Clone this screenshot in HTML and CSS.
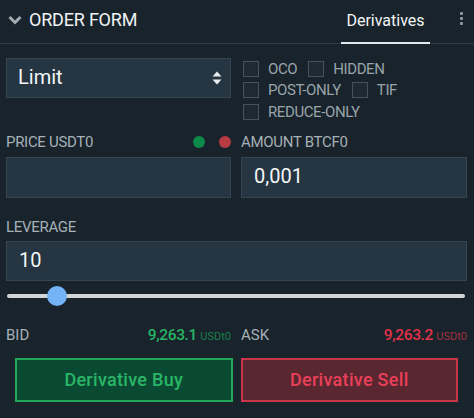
FILE: index.html
```html
<!DOCTYPE html>
<html>
<head>
<meta charset="utf-8">
<link rel="stylesheet" href="styles.css">
</head>
<body>
<div class="panel">
  <header class="header">
    <div class="title">
      <svg class="chev" width="14" height="10" viewBox="0 0 14 10"><path d="M1.5 2 L7 7.5 L12.5 2" fill="none" stroke="#a3abb2" stroke-width="3"/></svg>
      <span>ORDER FORM</span>
    </div>
    <div class="tabs">
      <div class="tab">Derivatives</div>
      <div class="kebab"><i></i><i></i><i></i></div>
    </div>
  </header>

  <div class="form">
    <div class="select">
      <span>Limit</span>
      <svg width="10" height="14" viewBox="0 0 10 14"><path d="M5 0.5 L9.5 5.5 H0.5 Z" fill="#e8ecef"/><path d="M5 13.5 L9.5 8.5 H0.5 Z" fill="#e8ecef"/></svg>
    </div>
    <div class="checks">
      <div class="crow"><label class="chk"><i class="box"></i>OCO</label><label class="chk"><i class="box"></i>HIDDEN</label></div>
      <div class="crow"><label class="chk"><i class="box"></i>POST-ONLY</label><label class="chk"><i class="box"></i>TIF</label></div>
      <div class="crow"><label class="chk"><i class="box"></i>REDUCE-ONLY</label></div>
    </div>

    <div class="field">
      <div class="label-row"><span class="label">PRICE USDT0</span><span class="dots"><i class="dot green"></i><i class="dot red"></i></span></div>
      <div class="input"></div>
    </div>
    <div class="field">
      <div class="label-row"><span class="label">AMOUNT BTCF0</span></div>
      <div class="input">0,001</div>
    </div>

    <div class="field wide">
      <div class="label-row"><span class="label">LEVERAGE</span></div>
      <div class="input">10</div>
    </div>

    <div class="slider wide"><div class="thumb"></div></div>

    <div class="quote"><span class="qlabel">BID</span><span class="qval buy">9,263.1 <small>USDt0</small></span></div>
    <div class="quote"><span class="qlabel">ASK</span><span class="qval sell">9,263.2 <small>USDt0</small></span></div>
  </div>

  <div class="buttons">
    <button class="btn btn-buy">Derivative Buy</button>
    <button class="btn btn-sell">Derivative Sell</button>
  </div>
</div>
</body>
</html>
```
FILE: styles.css
```css
* { box-sizing: border-box; }
html, body { margin: 0; padding: 0; }
body {
  width: 474px;
  height: 418px;
  background: #18232b;
  font-family: Roboto, "Liberation Sans", sans-serif;
  color: #e9edf0;
  overflow: hidden;
}
.panel { width: 474px; height: 418px; }

.header {
  height: 44px;
  border-bottom: 1px solid #2b3a44;
  display: flex;
  justify-content: space-between;
  align-items: stretch;
}
.title {
  display: flex;
  align-items: center;
  padding-left: 8px;
  padding-bottom: 5px;
  font-size: 18px;
  letter-spacing: -0.2px;
  color: #f0f3f5;
}
.chev { margin-right: 7px; margin-top: 2px; }
.tabs { display: flex; align-items: stretch; }
.tab {
  width: 89px;
  margin-right: 20px;
  display: flex;
  align-items: center;
  justify-content: center;
  padding-bottom: 2px;
  font-size: 16px;
  color: #f2f4f6;
  border-bottom: 2px solid #e6e9ec;
  margin-bottom: -1px;
}
.kebab {
  width: 22px;
  display: flex;
  flex-direction: column;
  align-items: center;
  justify-content: center;
  gap: 2px;
  padding-bottom: 6px;
  margin-right: 2px;
}
.kebab i { width: 3px; height: 3px; background: #8f989f; border-radius: 1px; display: block; }

.form {
  display: grid;
  grid-template-columns: 225px 226px;
  column-gap: 10px;
  padding: 14px 7px 0 6px;
}
.wide { grid-column: 1 / 3; }

.select {
  height: 40px;
  background: #253541;
  border: 1px solid #364651;
  display: flex;
  align-items: center;
  justify-content: space-between;
  padding: 0 8px 0 11px;
  font-size: 20px;
  color: #f3f5f7;
}
.select span { margin-top: -2px; }

.checks { display: flex; flex-direction: column; padding-left: 2px; padding-top: 0; }
.crow { display: flex; height: 21.5px; align-items: center; gap: 11px; }
.chk {
  display: flex;
  align-items: center;
  font-size: 15px;
  color: #99a3aa;
  letter-spacing: -0.4px;
}
.box {
  width: 16px;
  height: 16px;
  border: 1px solid #46525b;
  background: #1e2a32;
  margin-right: 9px;
  display: block;
}

.field { display: flex; flex-direction: column; }
.label-row {
  height: 20px;
  margin-top: 9px;
  margin-bottom: 5px;
  display: flex;
  align-items: center;
  justify-content: space-between;
}
.label { font-size: 15px; color: #a6b0b7; letter-spacing: -0.3px; }
.dots { display: flex; gap: 14px; padding-right: 0px; }
.dot { width: 12px; height: 12px; border-radius: 50%; display: block; }
.dot.green { background: #0d8a4a; }
.dot.red { background: #b83a43; }
.input {
  height: 41px;
  background: #253541;
  border: 1px solid #364651;
  display: flex;
  align-items: center;
  padding: 0 12px 2px;
  font-size: 20px;
  color: #f3f5f7;
}
.field.wide .label-row { margin-top: 19px; margin-bottom: 4px; }
.field.wide .input { height: 40px; }

.slider {
  position: relative;
  height: 4px;
  margin-top: 13px;
  margin-right: 2px;
  margin-left: 1px;
  background: #d3d6d8;
  border-radius: 2px;
}
.thumb {
  position: absolute;
  left: 40px;
  top: -8px;
  width: 20px;
  height: 20px;
  border-radius: 50%;
  background: #74b3f5;
}

.quote {
  display: flex;
  justify-content: space-between;
  align-items: baseline;
  margin-top: 28px;
  font-size: 15px;
}
.qlabel { color: #a6b0b7; }
.qval { font-size: 15.5px; font-weight: 500; letter-spacing: -0.4px; }
.qval small { font-size: 11px; font-weight: 400; letter-spacing: 0; }
.qval.buy { color: #27b464; }
.qval.buy small { color: #17804a; }
.qval.sell { color: #e0324a; }
.qval.sell small { color: #a03040; }

.buttons {
  display: flex;
  gap: 8px;
  padding: 14px 16px 0 15px;
}
.btn {
  flex: 1;
  height: 44px;
  font-family: Roboto, "Liberation Sans", sans-serif;
  font-size: 18px;
  font-weight: 500;
  letter-spacing: 0.3px;
  border-width: 2px;
  border-style: solid;
  cursor: pointer;
}
.btn-buy { background: #0a4a32; border-color: #21a85a; color: #2ab567; }
.btn-sell { background: #5a262f; border-color: #c93649; color: #e8405a; }
```
